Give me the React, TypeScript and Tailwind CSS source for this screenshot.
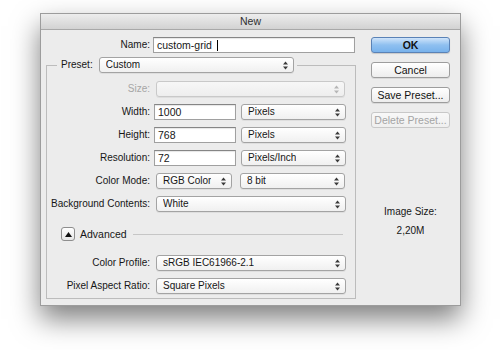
import clsx from "clsx"

function Arrows({ disabled }: { disabled?: boolean }) {
  return (
    <svg width="5" height="9" viewBox="0 0 5 9" className="shrink-0">
      <path d="M2.5 0.5 L5 3.6 H0 Z" fill={disabled ? "#b5b5b5" : "#3a3a3a"} />
      <path d="M0 5.4 H5 L2.5 8.5 Z" fill={disabled ? "#b5b5b5" : "#3a3a3a"} />
    </svg>
  )
}

function Select({ value, className, disabled }: { value?: string; className?: string; disabled?: boolean }) {
  return (
    <div
      className={clsx(
        "flex h-[16px] items-center justify-between rounded-[3px] border pl-[6px] pr-[5px] shadow-[0_1px_0_rgba(0,0,0,0.06)]",
        disabled
          ? "border-[#c9c9c9] bg-gradient-to-b from-[#f7f7f7] to-[#eeeeee]"
          : "border-[#a3a3a3] bg-gradient-to-b from-white to-[#f0f0f0]",
        className
      )}
    >
      <span className="truncate">{value}</span>
      <Arrows disabled={disabled} />
    </div>
  )
}

function Field({ value, className, caret }: { value: string; className?: string; caret?: boolean }) {
  return (
    <div
      className={clsx(
        "flex h-[16px] items-center border border-[#a0a0a0] border-t-[#858585] bg-white pl-[3px] shadow-[inset_0_1px_1px_rgba(0,0,0,0.1)]",
        className
      )}
    >
      <span className="text-[10.5px]">{value}</span>
      {caret && <span className="ml-[5px] h-[11px] w-px bg-black" />}
    </div>
  )
}

function Row({ label, children, className, muted }: { label: string; children: React.ReactNode; className?: string; muted?: boolean }) {
  return (
    <div className={clsx("flex h-[16px] items-center", className)}>
      <span className={clsx("w-[103px] text-right", muted && "text-[#a6a6a6]")}>{label}</span>
      <div className="ml-[4px] flex items-center">{children}</div>
    </div>
  )
}

function Button({ label, primary, disabled, className }: { label: string; primary?: boolean; disabled?: boolean; className?: string }) {
  return (
    <div
      className={clsx(
        "flex h-[16px] w-[79px] items-center justify-center rounded-[3px] border text-[10.5px]",
        primary &&
          "border-[#5a82b6] bg-gradient-to-b from-[#cfe4fa] via-[#8fc0f0] to-[#78b2ec] font-bold text-[#111] shadow-[0_1px_1px_rgba(0,0,0,0.15)]",
        !primary && !disabled && "border-[#9d9d9d] bg-gradient-to-b from-white to-[#ededed] text-[#111] shadow-[0_1px_0_rgba(0,0,0,0.08)]",
        disabled && "border-[#c8c8c8] bg-gradient-to-b from-[#f8f8f8] to-[#efefef] text-[#a4a4a4]",
        className
      )}
    >
      {label}
    </div>
  )
}

export default function App() {
  return (
    <div className="h-[350px] w-[500px] overflow-hidden bg-white pt-[13px] font-['Liberation_Sans',Arial,sans-serif] text-[10px] leading-none text-[#161616]">
      <div className="ml-[40px] flex h-[293px] w-[421px] flex-col border border-[#9c9c9c] bg-[#ececec] shadow-[0_13px_26px_rgba(0,0,0,0.5)]">
        <div className="h-[16px] border-b border-[#a8a8a8] bg-gradient-to-b from-[#ededed] to-[#d2d2d2] text-center text-[10.5px] leading-[15px] text-[#2e2e2e]">
          New
        </div>

        <div className="flex flex-1 pl-[5px] pr-[10px]">
          <div className="flex w-[310px] flex-col">
            <div className="mt-[7px] flex h-[16px] items-center">
              <span className="w-[104px] text-right">Name:</span>
              <Field value="custom-grid" caret className="ml-[3px] w-[202px]" />
            </div>

            <div className="mt-[4px] flex h-[16px] items-center">
              <div className="h-px w-[11px] bg-[#bcbcbc]" />
              <span className="ml-[4px]">Preset:</span>
              <Select value="Custom" className="ml-[6px] w-[195px]" />
              <div className="ml-[3px] h-px flex-1 bg-[#bcbcbc]" />
            </div>

            <div className="-mt-[8px] flex flex-col border-x border-b border-[#bcbcbc] pb-[4px] pt-[16px]">
              <Row label="Size:" muted>
                <Select disabled className="ml-[2px] w-[189px]" />
              </Row>
              <Row label="Width:" className="mt-[7px]">
                <Field value="1000" className="w-[82px]" />
                <Select value="Pixels" className="ml-[5px] w-[105px]" />
              </Row>
              <Row label="Height:" className="mt-[7px]">
                <Field value="768" className="w-[82px]" />
                <Select value="Pixels" className="ml-[5px] w-[105px]" />
              </Row>
              <Row label="Resolution:" className="mt-[7px]">
                <Field value="72" className="w-[82px]" />
                <Select value="Pixels/Inch" className="ml-[5px] w-[105px]" />
              </Row>
              <Row label="Color Mode:" className="mt-[7px]">
                <Select value="RGB Color" className="ml-[2px] w-[76px]" />
                <Select value="8 bit" className="ml-[8px] w-[105px]" />
              </Row>
              <Row label="Background Contents:" className="mt-[7px]">
                <Select value="White" className="ml-[2px] w-[190px]" />
              </Row>

              <div className="mt-[14px] flex h-[16px] items-center">
                <div className="ml-[14px] flex h-[14px] w-[14px] items-center justify-center rounded-[3px] border border-[#8e8e8e] bg-gradient-to-b from-white to-[#e6e6e6]">
                  <svg width="7" height="5" viewBox="0 0 7 5">
                    <path d="M3.5 0 L7 5 H0 Z" fill="#111" />
                  </svg>
                </div>
                <span className="ml-[5px] text-[10.5px]">Advanced</span>
                <div className="ml-[6px] mr-[12px] h-px flex-1 bg-[#c6c6c6]" />
              </div>

              <Row label="Color Profile:" className="mt-[13px]">
                <Select value="sRGB IEC61966-2.1" className="ml-[2px] w-[190px]" />
              </Row>
              <Row label="Pixel Aspect Ratio:" className="mt-[7px]">
                <Select value="Square Pixels" className="ml-[2px] w-[190px]" />
              </Row>
            </div>
          </div>

          <div className="ml-[15px] flex w-[79px] flex-col items-center">
            <Button label="OK" primary className="mt-[7px]" />
            <Button label="Cancel" className="mt-[9px]" />
            <Button label="Save Preset..." className="mt-[9px]" />
            <Button label="Delete Preset..." disabled className="mt-[9px]" />
            <span className="mt-[79px]">Image Size:</span>
            <span className="mt-[9px]">2,20M</span>
          </div>
        </div>
      </div>
    </div>
  )
}
